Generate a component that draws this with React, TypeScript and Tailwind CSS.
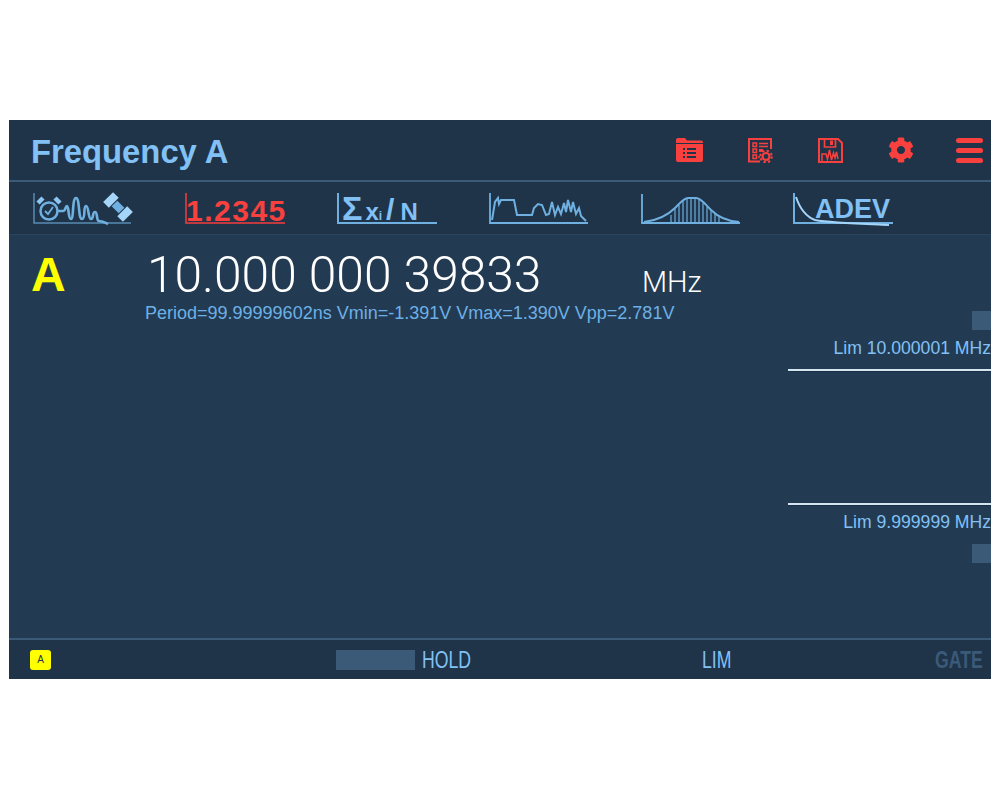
import { FaCog } from "react-icons/fa";

const RED = "#f8403f";

function FolderIcon() {
  return (
    <svg width="27" height="24" viewBox="0 0 27 24">
      <path d="M0 2a2 2 0 0 1 2-2h7l2 2.500h14a2 2 0 0 1 2 2V5H0z" fill={RED} />
      <path d="M0 6h27v16a2 2 0 0 1-2 2H2a2 2 0 0 1-2-2z" fill={RED} />
      <g fill="#203449">
        <rect x="7" y="10" width="2" height="2" />
        <rect x="11" y="10" width="9" height="2" />
        <rect x="7" y="14" width="2" height="2" />
        <rect x="11" y="14" width="9" height="2" />
        <rect x="7" y="18" width="2" height="2" />
        <rect x="11" y="18" width="9" height="2" />
      </g>
    </svg>
  );
}

function ListGearIcon() {
  return (
    <svg width="25" height="25" viewBox="0 0 25 25" fill="none" stroke={RED} strokeWidth="1.500">
      <path d="M12 23.500H1V1h22v10" strokeWidth="2" />
      <rect x="5" y="5" width="3.500" height="3.500" />
      <path d="M11 5.500h9M11 8.500h9" strokeWidth="1.600" />
      <rect x="5" y="11" width="3.500" height="3.500" />
      <path d="M11 12.500h4" strokeWidth="3" />
      <rect x="5" y="17" width="3.500" height="3.500" />
      <path d="M10 19h2" strokeWidth="1.600" />
      <circle cx="18" cy="18.500" r="3.500" strokeWidth="2.200" />
      <circle cx="18" cy="18.500" r="5.800" strokeWidth="2" strokeDasharray="2.300 2.250" />
    </svg>
  );
}

function SaveWaveIcon() {
  return (
    <svg width="25" height="25" viewBox="0 0 25 25" fill="none" stroke={RED} strokeWidth="2">
      <path d="M1 1h19l4 4v19H1z" />
      <path d="M6.500 1v8h11V1" strokeWidth="1.700" />
      <rect x="12" y="2.500" width="3" height="4.500" fill={RED} stroke="none" />
      <path d="M4 23v-7h4l1.500 5 2-9 2 10 2-7 1.500 5 1.500-6 1.500 7" strokeWidth="1.500" />
    </svg>
  );
}

function MenuIcon() {
  return (
    <div className="flex w-[27px] flex-col gap-[5px]">
      <div className="h-[5px] rounded-full bg-[#f8403f]" />
      <div className="h-[5px] rounded-full bg-[#f8403f]" />
      <div className="h-[5px] rounded-full bg-[#f8403f]" />
    </div>
  );
}

function ClockSatIcon() {
  return (
    <svg width="100" height="36" viewBox="0 0 100 36" fill="none" stroke="#6fb0e0">
      <path d="M1 3v30h97" strokeOpacity="0.7" strokeWidth="1.500" />
      <circle cx="16" cy="21" r="8.500" strokeWidth="2.500" />
      <path d="M12 21l3 3 5-7" strokeWidth="1.800" />
      <path d="M5 13l5-5M27 13l-5-5" strokeWidth="4.500" stroke="#8cc6f0" />
      <path d="M25 21h5c3 0 2-5 4-5s1 13 4 13 1-21 5-21 2 21 6 21 1-13 4-13 2 13 5 13 1-7 4-7 1 9 4 9 5 1 9 3" strokeWidth="2.600" />
      <g transform="rotate(-45 85 17)" stroke="none">
        <rect x="81" y="12" width="8" height="10" fill="#6fb0e0" />
        <rect x="78" y="3" width="14" height="8" fill="#a5d5f8" />
        <rect x="78" y="23" width="14" height="8" fill="#a5d5f8" />
      </g>
    </svg>
  );
}

function WaveIcon() {
  return (
    <svg width="100" height="36" viewBox="0 0 100 36" fill="none" stroke="#6fb0e0">
      <path d="M1 3v30h98" strokeWidth="1.800" />
      <path d="M3 30L6 12l3-4 1 6 2-4h13l3 15h15l2-7 4-4 4 1 4 10 3-1 3-12 3 13 3-8 3 7 3-11 2 9 2-12 3 12 2-10 3 12 3-6 2 8 5 5" strokeWidth="2" />
    </svg>
  );
}

function GaussIcon() {
  const bars: [number, number][] = [
    [30, 25], [34, 19], [38, 15], [42, 11], [46, 9], [50, 8], [54, 8],
    [58, 10], [62, 13], [66, 17], [70, 21], [74, 24], [78, 27],
  ];
  return (
    <svg width="100" height="36" viewBox="0 0 100 36" fill="none" stroke="#6fb0e0">
      <path d="M1 4v29h98" strokeWidth="1.800" />
      <path d="M3 32C20 30 28 24 34 18 40 12 43 8 47 8h8c5 0 9 6 15 12 6 6 14 11 28 12" strokeWidth="2" />
      {bars.map(([x, y]) => (
        <path key={x} d={`M${x} 32V${y}`} strokeWidth="1.500" strokeOpacity="0.8" />
      ))}
    </svg>
  );
}

function Tab({ children, color }: { children: React.ReactNode; color: string }) {
  return (
    <div className={`relative mt-[1px] h-[31px] w-[100px] border-b-2 border-l-2 ${color}`}>
      {children}
    </div>
  );
}

export default function App() {
  return (
    <div className="min-h-[800px] bg-white pt-[120px] pl-[9px] font-['Liberation_Sans',sans-serif]">
      <div className="flex h-[559px] w-[982px] flex-col overflow-hidden bg-[#233b52]">
        {/* title bar */}
        <div className="flex h-[62px] shrink-0 items-center justify-between border-b-2 border-[#3a5a78] bg-[#203449] pr-[8px] pl-[22px]">
          <h1 className="pt-[5px] text-[32.800px] leading-none font-bold text-[#82c1f5]">Frequency A</h1>
          <div className="flex items-center">
            <FolderIcon />
            <div className="ml-[45px]"><ListGearIcon /></div>
            <div className="ml-[45px]"><SaveWaveIcon /></div>
            <div className="ml-[45px]"><FaCog size={26} color={RED} /></div>
            <div className="ml-[42px]"><MenuIcon /></div>
          </div>
        </div>

        {/* mode tabs */}
        <div className="flex h-[53px] shrink-0 items-center gap-[52px] border-b border-[#2b4560] bg-[#203449] pl-[24px]">
          <ClockSatIcon />
          <Tab color="border-[#c23a40]">
            <span className="absolute bottom-[-4px] left-[-1px] text-[30px] leading-none font-bold tracking-[1.500px] text-[#f8403f]">1.2345</span>
          </Tab>
          <Tab color="border-[#6fb0e0]">
            <span className="absolute bottom-[-3px] left-[3px] inline-flex items-baseline leading-none font-bold whitespace-nowrap text-[#82c1f5]">
              <span className="text-[34px]">Σ</span>
              <span className="ml-[3px] text-[24px]">x</span>
              <span className="text-[12px]">i</span>
              <span className="ml-[4px] text-[30px]">/</span>
              <span className="ml-[6px] text-[24px]">N</span>
            </span>
          </Tab>
          <WaveIcon />
          <GaussIcon />
          <Tab color="border-[#6fb0e0]">
            <span className="absolute bottom-[-1px] left-[20px] text-[27px] leading-none font-bold text-[#82c1f5]">ADEV</span>
            <svg className="absolute top-0 left-0 overflow-visible" width="96" height="32" viewBox="0 0 96 32" fill="none" stroke="#a5d5f8" strokeWidth="2">
              <path d="M1 4C5 16 12 24 20 27c15 3 50 4 74 5" />
            </svg>
          </Tab>
        </div>

        {/* reading */}
        <div className="flex min-h-0 flex-1">
          <div className="flex flex-1 items-start pt-[11px] pl-[22px]">
            <span className="w-[116px] text-[48px] leading-[58px] font-bold text-[#ffff00]">A</span>
            <div>
              <div className="flex items-baseline font-['Roboto',sans-serif] font-light text-white">
                <span className="w-[495px] text-[49.700px] leading-[58px]">10.000 000 39833</span>
                <span className="text-[29px]">MHz</span>
              </div>
              <p className="mt-[-2px] ml-[-2px] text-[18px] leading-[21px] text-[#6db0e6]">Period=99.99999602ns Vmin=-1.391V Vmax=1.390V Vpp=2.781V</p>
            </div>
          </div>

          {/* limits */}
          <div className="flex w-[203px] shrink-0 flex-col items-end pt-[76px]">
            <div className="h-[19px] w-[19px] bg-[#3a5a78]" />
            <p className="mt-[8px] text-[17.600px] leading-[21px] whitespace-nowrap text-[#82c1f5]">Lim 10.000001 MHz</p>
            <div className="mt-[10px] h-[2px] w-full bg-[#d6e4ef] shadow-[0_1px_0_#17304a]" />
            <div className="mt-[132px] h-[2px] w-full bg-[#d6e4ef] shadow-[0_1px_0_#17304a]" />
            <p className="mt-[7px] text-[17.600px] leading-[21px] whitespace-nowrap text-[#82c1f5]">Lim 9.999999 MHz</p>
            <div className="mt-[11px] h-[19px] w-[19px] bg-[#3a5a78]" />
          </div>
        </div>

        {/* status bar */}
        <div className="flex h-[41px] shrink-0 items-center border-t-2 border-[#3a5a78] bg-[#203449] pl-[21px]">
          <div className="flex h-[20px] w-[21px] shrink-0 items-center justify-center rounded-[3px] bg-[#ffff00] text-[10px] text-[#203449]">A</div>
          <div className="ml-[285px] h-[20px] w-[79px] shrink-0 bg-[#3a5a78]" />
          <span className="ml-[7px] w-[280px] shrink-0 origin-left scale-x-[0.735] text-[24px] leading-none text-[#82c1f5]">HOLD</span>
          <span className="w-[233px] shrink-0 origin-left scale-x-[0.735] text-[24px] leading-none text-[#82c1f5]">LIM</span>
          <span className="shrink-0 origin-left scale-x-[0.735] text-[24px] leading-none font-bold text-[#3a5a78]">GATE</span>
        </div>
      </div>
    </div>
  );
}
